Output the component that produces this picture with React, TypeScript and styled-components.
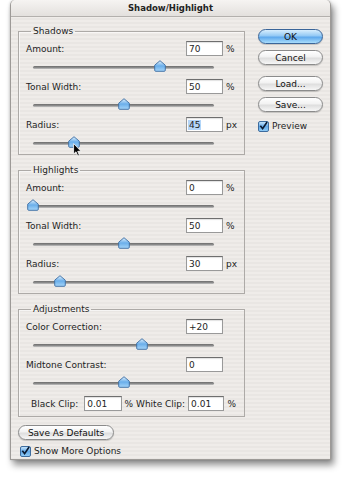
import React from 'react';
import styled, { createGlobalStyle } from 'styled-components';

const TRACK_LEFT = 7;
const TRACK_WIDTH = 181;

const GlobalStyle = createGlobalStyle`
  html, body {
    margin: 0;
    padding: 0;
    background: #fff;
  }
  body {
    font-family: 'DejaVu Sans', 'Liberation Sans', sans-serif;
  }
`;

const Page = styled.div`
  width: 342px;
  height: 480px;
  padding-left: 10px;
  box-sizing: border-box;
  background: #fff;
  overflow: hidden;
`;

const Window = styled.div`
  width: 321px;
  height: 460px;
  box-sizing: border-box;
  border: 1px solid #9d9a97;
  border-top: none;
  border-radius: 5px 5px 0 0;
  background: repeating-linear-gradient(180deg, #efece9 0 2px, #e9e6e3 2px 4px);
  box-shadow: 3px 5px 7px rgba(0, 0, 0, 0.45), 0 0 3px rgba(0, 0, 0, 0.2);
  display: flex;
  flex-direction: column;
  color: #1e1e1e;
  font-size: 9px;
`;

const TitleBar = styled.div`
  height: 16px;
  line-height: 16px;
  text-align: center;
  font-size: 8.5px;
  font-weight: bold;
  color: #222;
  border-bottom: 1px solid #b3b0ad;
  border-radius: 5px 5px 0 0;
  background: linear-gradient(180deg, #f6f4f2, #e3e0dd);
`;

const Body = styled.div`
  display: flex;
  align-items: flex-start;
  gap: 13px;
  padding: 9px 7px 0 7px;
`;

const LeftCol = styled.div`
  width: 227px;
  display: flex;
  flex-direction: column;
`;

const RightCol = styled.div`
  width: 65px;
  padding-top: 3px;
  display: flex;
  flex-direction: column;
`;

const Group = styled.fieldset`
  margin: 0;
  padding: 4px 5px 0 7px;
  min-width: 0;
  border: 1px solid #adaaa7;
  box-shadow: inset 1px 1px 0 rgba(255, 255, 255, 0.6);
  & + & {
    margin-top: 10px;
  }
`;

const Legend = styled.legend`
  margin-left: 5px;
  padding: 0 2px;
  line-height: 11px;
  font-size: 9px;
  color: #1e1e1e;
`;

const Row = styled.div`
  display: flex;
  align-items: center;
  height: 15px;
`;

const Label = styled.span`
  flex: 1;
  white-space: nowrap;
`;

const Field = styled.span<{ $w?: number }>`
  display: flex;
  align-items: center;
  width: ${(p) => p.$w ?? 37}px;
  height: 15px;
  box-sizing: border-box;
  padding: 0 2px;
  background: #fff;
  border: 1px solid #999;
  border-top-color: #6e6e6e;
  box-shadow: inset 0 1px 1px rgba(0, 0, 0, 0.12);
  font-size: 9px;
`;

const Selected = styled.span`
  background: #b4d5f8;
  padding: 0 1px;
  margin-left: -1px;
`;

const Unit = styled.span`
  width: 16px;
  padding-left: 3px;
  box-sizing: border-box;
`;

const SliderBox = styled.div`
  position: relative;
  height: 23px;
  padding-top: 10px;
  box-sizing: border-box;
  &:last-child {
    height: 22px;
  }
`;

const Track = styled.div`
  margin-left: ${TRACK_LEFT}px;
  width: ${TRACK_WIDTH}px;
  height: 3px;
  border-radius: 2px;
  background: linear-gradient(180deg, #6d6d6d, #8a8a8a 50%, #c4c4c4);
`;

const Thumb = styled.svg`
  position: absolute;
  top: 4px;
  width: 12px;
  height: 12px;
`;

const Pointer = styled.svg`
  position: absolute;
  top: 11px;
  width: 9px;
  height: 14px;
  z-index: 2;
`;

const ClipRow = styled.div`
  display: flex;
  align-items: center;
  height: 15px;
  margin: 1px 0 5px;
  padding-left: 5px;
  white-space: nowrap;
`;

const ClipText = styled.span`
  margin: 0 3px;
`;

const Button = styled.div<{ $primary?: boolean; $w?: number }>`
  width: ${(p) => (p.$w ? `${p.$w}px` : '100%')};
  height: 15px;
  box-sizing: border-box;
  border-radius: 8px;
  border: 1px solid ${(p) => (p.$primary ? '#3a6599' : '#8b8b8b')};
  background: ${(p) =>
    p.$primary
      ? 'linear-gradient(180deg, #d8eefd, #93c9f5 45%, #5ea8ec 55%, #a9ddfc)'
      : 'linear-gradient(180deg, #ffffff, #f2f2f2 45%, #dedede 55%, #f7f7f7)'};
  box-shadow: 0 1px 1px rgba(0, 0, 0, 0.18);
  display: flex;
  align-items: center;
  justify-content: center;
  font-size: 9px;
  color: #111;
`;

const ButtonGap = styled.div<{ $h: number }>`
  height: ${(p) => p.$h}px;
  flex: none;
`;

const CheckRow = styled.div<{ $indent?: number }>`
  display: flex;
  align-items: center;
  height: 12px;
  padding-left: ${(p) => p.$indent ?? 0}px;
  white-space: nowrap;
`;

const Box = styled.span`
  width: 11px;
  height: 11px;
  box-sizing: border-box;
  border-radius: 2px;
  border: 1px solid #3d6c9e;
  background: linear-gradient(180deg, #c4e4fc, #62a8e8 50%, #8fcbf6);
  display: flex;
  align-items: center;
  justify-content: center;
  margin-right: 3px;
  flex: none;
`;

const Footer = styled.div`
  margin-top: 8px;
`;

function Check({ label, indent }: { label: string; indent?: number }) {
  return (
    <CheckRow $indent={indent}>
      <Box>
        <svg width="10" height="10" viewBox="0 0 10 10">
          <path d="M1.5 4.8 L4 8 L9 0.5" fill="none" stroke="#0b1a30" strokeWidth="1.8" />
        </svg>
      </Box>
      {label}
    </CheckRow>
  );
}

function Slider({ value, pointer }: { value: number; pointer?: boolean }) {
  const x = TRACK_LEFT + value * TRACK_WIDTH;
  return (
    <SliderBox>
      <Track />
      <Thumb viewBox="0 0 12 12" style={{ left: x - 6 }}>
        <defs>
          <linearGradient id="thumbFill" x1="0" y1="0" x2="0" y2="1">
            <stop offset="0" stopColor="#e3f3ff" />
            <stop offset="0.5" stopColor="#6aaeea" />
            <stop offset="1" stopColor="#a6d6fa" />
          </linearGradient>
        </defs>
        <path
          d="M6 0.7 L11.3 5.2 V10.2 Q11.3 11.3 10.2 11.3 H1.8 Q0.7 11.3 0.7 10.2 V5.2 Z"
          fill="url(#thumbFill)"
          stroke="#3a6ca3"
          strokeWidth="0.9"
        />
      </Thumb>
      {pointer && (
        <Pointer viewBox="0 0 9 14" style={{ left: x - 1 }}>
          <path d="M0.6 0.6 V11 L3 8.8 L4.8 13 L6.4 12.3 L4.7 8.3 H8 Z" fill="#000" stroke="#fff" strokeWidth="0.8" />
        </Pointer>
      )}
    </SliderBox>
  );
}

function ValueRow({ label, value, unit, selected }: { label: string; value: string; unit?: string; selected?: boolean }) {
  return (
    <Row>
      <Label>{label}</Label>
      <Field>{selected ? <Selected>{value}</Selected> : value}</Field>
      <Unit>{unit}</Unit>
    </Row>
  );
}

export default function App() {
  return (
    <Page>
      <GlobalStyle />
      <Window>
        <TitleBar>Shadow/Highlight</TitleBar>
        <Body>
          <LeftCol>
            <Group>
              <Legend>Shadows</Legend>
              <ValueRow label="Amount:" value="70" unit="%" />
              <Slider value={0.7} />
              <ValueRow label="Tonal Width:" value="50" unit="%" />
              <Slider value={0.5} />
              <ValueRow label="Radius:" value="45" unit="px" selected />
              <Slider value={0.226} pointer />
            </Group>
            <Group>
              <Legend>Highlights</Legend>
              <ValueRow label="Amount:" value="0" unit="%" />
              <Slider value={0} />
              <ValueRow label="Tonal Width:" value="50" unit="%" />
              <Slider value={0.5} />
              <ValueRow label="Radius:" value="30" unit="px" />
              <Slider value={0.15} />
            </Group>
            <Group>
              <Legend>Adjustments</Legend>
              <ValueRow label="Color Correction:" value="+20" />
              <Slider value={0.6} />
              <ValueRow label="Midtone Contrast:" value="0" />
              <Slider value={0.5} />
              <ClipRow>
                Black Clip:
                <ClipText />
                <Field $w={38}>0.01</Field>
                <ClipText>% White Clip:</ClipText>
                <Field>0.01</Field>
                <ClipText>%</ClipText>
              </ClipRow>
            </Group>
            <Footer>
              <Button $w={96}>Save As Defaults</Button>
              <ButtonGap $h={5} />
              <Check label="Show More Options" indent={2} />
            </Footer>
          </LeftCol>
          <RightCol>
            <Button $primary>OK</Button>
            <ButtonGap $h={6} />
            <Button>Cancel</Button>
            <ButtonGap $h={11} />
            <Button>Load...</Button>
            <ButtonGap $h={6} />
            <Button>Save...</Button>
            <ButtonGap $h={8} />
            <Check label="Preview" />
          </RightCol>
        </Body>
      </Window>
    </Page>
  );
}
